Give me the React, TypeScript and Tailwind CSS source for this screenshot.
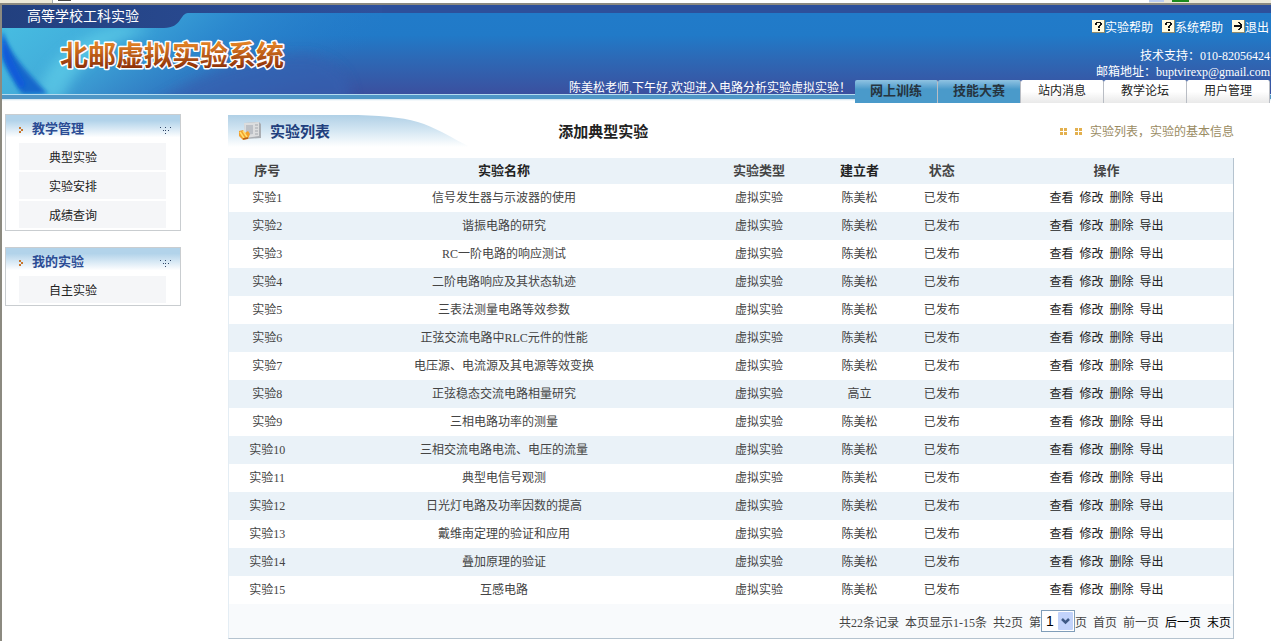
import { useState } from "react";
import clsx from "clsx";

const tabs = [
  { label: "网上训练", active: true },
  { label: "技能大赛", active: true },
  { label: "站内消息", active: false },
  { label: "教学论坛", active: false },
  { label: "用户管理", active: false },
];

const menus = [
  { title: "教学管理", items: ["典型实验", "实验安排", "成绩查询"] },
  { title: "我的实验", items: ["自主实验"] },
];

const experiments = [
  { name: "信号发生器与示波器的使用", author: "陈美松" },
  { name: "谐振电路的研究", author: "陈美松" },
  { name: "RC一阶电路的响应测试", author: "陈美松" },
  { name: "二阶电路响应及其状态轨迹", author: "陈美松" },
  { name: "三表法测量电路等效参数", author: "陈美松" },
  { name: "正弦交流电路中RLC元件的性能", author: "陈美松" },
  { name: "电压源、电流源及其电源等效变换", author: "陈美松" },
  { name: "正弦稳态交流电路相量研究", author: "高立" },
  { name: "三相电路功率的测量", author: "陈美松" },
  { name: "三相交流电路电流、电压的流量", author: "陈美松" },
  { name: "典型电信号观测", author: "陈美松" },
  { name: "日光灯电路及功率因数的提高", author: "陈美松" },
  { name: "戴维南定理的验证和应用", author: "陈美松" },
  { name: "叠加原理的验证", author: "陈美松" },
  { name: "互感电路", author: "陈美松" },
];

const actions = ["查看", "修改", "删除", "导出"];

function HelpIcon({ type }: { type: "help" | "exit" }) {
  return (
    <svg width="13" height="13" viewBox="0 0 13 13" shapeRendering="crispEdges" className="mb-1" aria-hidden="true">
      <rect width="13" height="13" fill="#8f8a6a" />
      <rect width="12" height="12" fill="#fffbe0" />
      {type === "help" ? (
        <path d="M4 2h5v1H4zM3 3h2v2H3zM8 3h2v2H8zM7 5h2v1H7zM6 6h2v2H6zM6 9h2v2H6z" fill="#111" />
      ) : (
        <path d="M2 5h8v2H2zM6 2h2v1H6zM7 3h2v1H7zM8 4h2v1H8zM8 7h2v1H8zM7 8h2v1H7zM6 9h2v1H6z" fill="#111" />
      )}
    </svg>
  );
}

function HeaderArt() {
  return (
    <svg width="380" height="90" viewBox="0 0 380 90" className="absolute left-0 top-0" aria-hidden="true">
      <defs>
        <linearGradient id="sky" x1="0" y1="0" x2="1" y2="0.25">
          <stop offset="0" stopColor="#48bfe2" />
          <stop offset="0.3" stopColor="#43b0dc" stopOpacity="0.95" />
          <stop offset="0.6" stopColor="#2f8dd0" stopOpacity="0.75" />
          <stop offset="1" stopColor="#2878c8" stopOpacity="0" />
        </linearGradient>
        <linearGradient id="ribbon" x1="0" y1="0" x2="1" y2="0">
          <stop offset="0" stopColor="#22407f" />
          <stop offset="1" stopColor="#2e519d" />
        </linearGradient>
        <filter id="soft" x="-30%" y="-30%" width="160%" height="160%">
          <feGaussianBlur stdDeviation="6" />
        </filter>
        <filter id="edge" x="-30%" y="-30%" width="160%" height="160%">
          <feGaussianBlur stdDeviation="2" />
        </filter>
        <clipPath id="art">
          <rect y="8" width="380" height="81" />
        </clipPath>
      </defs>
      <g clipPath="url(#art)">
        <rect y="8" width="380" height="81" fill="url(#sky)" />
        <path d="M60 95C75 55 110 35 150 25L120 20C80 28 40 55 35 95Z" fill="#63d3ea" opacity="0.6" filter="url(#soft)" />
        <path d="M150 100C200 68 250 48 310 50C345 60 350 80 350 100Z" fill="#3560b0" opacity="0.7" filter="url(#soft)" />
        <path d="M0 26C8 50 28 70 46 89H20C10 72 2 60 0 52Z" fill="#1568cc" filter="url(#edge)" />
        <path d="M0 26C4 42 12 60 24 80L18 84C8 68 2 54 0 48Z" fill="#0a55e0" opacity="0.7" filter="url(#edge)" />
      </g>
      <path d="M0 0H380V8H186C178 8 180 23 162 23H0Z" fill="url(#ribbon)" />
    </svg>
  );
}

function Logo() {
  return (
    <svg width="260" height="52" viewBox="0 0 260 52" role="img" aria-label="北邮虚拟实验系统">
      <defs>
        <linearGradient id="gold" x1="0" y1="0" x2="0" y2="1">
          <stop offset="0.25" stopColor="#e08024" />
          <stop offset="0.85" stopColor="#8c2f08" />
        </linearGradient>
      </defs>
      <text
        x="4"
        y="37"
        fill="url(#gold)"
        stroke="#fff"
        strokeWidth="3"
        strokeLinejoin="round"
        paintOrder="stroke"
        className="font-['Noto_Sans_CJK_SC',sans-serif] text-[28px] font-bold"
      >
        北邮虚拟实验系统
      </text>
    </svg>
  );
}

function Header() {
  return (
    <header className="relative flex h-[98px] justify-between bg-[linear-gradient(to_bottom,#2d509b_0,#2d509b_8px,#217bc9_8px,#217ac8_30px,#2d68b5_55px,#3b509f_89px,#b5dcf0_89px,#b5dcf0_90px,#4f96c6_90px,#4f96c6_94px,#cfe3ef_94px,#ffffff_96px)] text-white">
      <HeaderArt />
      <div className="relative flex flex-col">
        <p className="pl-[25px] text-[14px] leading-[24px]">高等学校工科实验</p>
        <h1 className="pl-[54px]">
          <Logo />
        </h1>
      </div>
      <div className="relative flex flex-col items-end pt-[14px]">
        <nav className="flex h-[18px] items-center gap-[9px] pr-[2px]">
          <a href="#lab-help" className="flex items-center leading-[18px]"><HelpIcon type="help" />实验帮助</a>
          <a href="#system-help" className="flex items-center leading-[18px]"><HelpIcon type="help" />系统帮助</a>
          <a href="#exit" className="flex items-center leading-[18px]"><HelpIcon type="exit" />退出</a>
        </nav>
        <p className="mt-[11px] pr-px leading-[16px]">技术支持：010-82056424</p>
        <p className="pr-px leading-[16px]">邮箱地址：buptvirexp@gmail.com</p>
        <div className="flex">
          <p className="pr-1 leading-[16px]">陈美松老师,下午好,欢迎进入电路分析实验虚拟实验！</p>
          <nav className="flex pr-px">
            {tabs.map((tab) => (
              <a
                key={tab.label}
                href="#tab"
                className={clsx(
                  "h-[23px] w-[83px] rounded-t-[2px] border-r border-[#b9bdc4] text-center leading-[22px]",
                  tab.active
                    ? "bg-linear-to-b from-[#8fc3e2] to-[#4a9aca] to-40% text-[13px] font-bold text-[#26343f]"
                    : "bg-linear-to-b from-white from-50% to-[#e9e9e9] text-[#222]",
                )}
              >
                {tab.label}
              </a>
            ))}
          </nav>
        </div>
      </div>
    </header>
  );
}

function SideMenu({ title, items }: { title: string; items: string[] }) {
  return (
    <section className="border border-[#c9cdd0] pb-[2px]">
      <h2 className="flex h-7 items-center bg-linear-to-b from-[#b2d3ea] from-20% to-white to-80% pl-3 pr-2 text-[13px] font-bold leading-7 text-[#2b4c94]">
        <svg width="6" height="8" viewBox="0 0 6 8" shapeRendering="crispEdges" className="mt-1" aria-hidden="true">
          <path d="M1 0h2v2H1zM3 2h2v2H3zM1 4h2v2H1z" fill="#c8762c" />
        </svg>
        <span className="ml-2 flex-1">{title}</span>
        <svg width="12" height="8" viewBox="0 0 12 8" shapeRendering="crispEdges" className="mt-1" aria-hidden="true">
          <path d="M0 0h1v1H0zM5 0h1v1H5zM10 0h1v1h-1zM3 3h1v1H3zM8 3h1v1H8zM5 3h1v1H5zM5 6h1v1H5z" fill="#2f4668" />
        </svg>
      </h2>
      <ul className="flex flex-col gap-[2px] pl-[13px] pr-[14px]">
        {items.map((item) => (
          <li key={item} className="h-[27px] bg-[#f5f6f8] pl-[30px] leading-[30px]">
            <a href="#menu" className="text-[#222]">{item}</a>
          </li>
        ))}
      </ul>
    </section>
  );
}

function ListHeading() {
  return (
    <div className="relative flex h-11 items-center">
      <svg width="240" height="32" viewBox="0 0 240 32" className="absolute left-0 top-[1px]" aria-hidden="true">
        <defs>
          <linearGradient id="swoosh" x1="0" y1="0" x2="0" y2="1">
            <stop offset="0" stopColor="#b0d0e6" />
            <stop offset="0.5" stopColor="#d5e7f3" />
            <stop offset="1" stopColor="#ffffff" />
          </linearGradient>
        </defs>
        <path d="M0 0H130C160 1 180 3 196 9C212 15 228 25 240 31V32H0Z" fill="url(#swoosh)" />
      </svg>
      <div className="relative flex w-[36%] min-w-[240px] items-center pl-[10px] pb-2">
        <svg width="24" height="22" viewBox="0 0 24 22" aria-hidden="true">
          <path d="M6 2L21 1L23 3V17L8 18Z" fill="#aaaeb3" />
          <path d="M6 2L21 1V15L7 17Z" fill="#dcddde" />
          <path d="M8 4L15 4V13L8 14Z" fill="#bcc0c6" />
          <path d="M17 4h3M17 7h3M17 10h3M17 13h3" stroke="#a4a8ad" />
          <path d="M1 10L5 9L7 12L10 10L12 13L10 18L5 19L1 15Z" fill="#f2a02c" />
          <path d="M2 11l4 6M5 10l4 6" stroke="#ffdf70" strokeWidth="1.5" />
          <path d="M5 18l5-1" stroke="#b85f18" strokeWidth="1.5" />
        </svg>
        <h2 className="ml-2 text-[15px] font-bold leading-5 text-[#223f7d]">实验列表</h2>
      </div>
      <a href="#add" className="relative -ml-8 pb-2 text-[15px] font-bold leading-5 text-[#222]">添加典型实验</a>
      <p className="ml-auto flex items-center pb-2 leading-5 text-[#9a8b62]">
        {[0, 1].map((i) => (
          <svg key={i} width="8" height="8" viewBox="0 0 8 8" shapeRendering="crispEdges" className="mr-[7px]" aria-hidden="true">
            <path d="M0 0h3v3H0zM4 0h3v3H4zM0 4h3v3H0zM4 4h3v3H4z" fill="#e3b04e" />
          </svg>
        ))}
        实验列表，实验的基本信息
      </p>
    </div>
  );
}

function Pager() {
  const [page, setPage] = useState("1");

  return (
    <div className="flex h-[34px] items-center justify-end bg-[#f8fafc] pr-[2px] pt-1 text-[#444]">
      <span className="mr-[6px]">共22条记录</span>
      <span className="mr-[6px]">本页显示1-15条</span>
      <span className="mr-[6px]">共2页</span>
      <label htmlFor="page">第</label>
      <span className="relative mb-1 flex">
        <select
          id="page"
          value={page}
          onChange={(e) => setPage(e.target.value)}
          className="h-[22px] w-[34px] appearance-none border border-[#7f9db9] bg-white pl-1 font-['Liberation_Sans',sans-serif] text-[14px] leading-5 text-black"
        >
          <option>1</option>
          <option>2</option>
        </select>
        <svg width="15" height="18" viewBox="0 0 15 18" className="pointer-events-none absolute right-[2px] top-[2px]" aria-hidden="true">
          <rect width="15" height="18" rx="1" fill="#c2d3fb" />
          <path d="M4 7l3.5 3.5L11 7" fill="none" stroke="#3f5a86" strokeWidth="2.5" />
        </svg>
      </span>
      <span className="mr-[6px]">页</span>
      <span className="mr-[6px]">首页</span>
      <span className="mr-[6px]">前一页</span>
      <a href="#next" className="mr-[6px] text-black">后一页</a>
      <a href="#last" className="text-black">末页</a>
    </div>
  );
}

export default function App() {
  return (
    <div className="min-h-screen bg-white font-['Liberation_Serif','Noto_Sans_CJK_SC',serif] text-[12px] text-[#444]">
      {/* bottom edge of the browser toolbar */}
      <div className="flex h-[3px] bg-[#ece9d8]">
        <div className="ml-[52px] flex-1 border-l border-[#a0a8b0] bg-white pl-[5px]">
          <div className="h-px w-[13px] bg-[#444]" />
        </div>
        <div className="h-[2px] w-[15px] bg-[#bccdf0]" />
        <div className="ml-2 mr-[82px] h-[2px] w-[17px] bg-[#1c8a1c]" />
      </div>
      <div className="min-h-[638px] border-l-2 border-t-2 border-[#8c8a80]">
        <Header />
        <div className="flex items-start pl-[3px] pr-[37px] pt-[11px]">
          <aside className="flex w-[176px] shrink-0 flex-col gap-4">
            {menus.map((menu) => (
              <SideMenu key={menu.title} title={menu.title} items={menu.items} />
            ))}
          </aside>
          <main className="ml-[47px] flex-1">
            <ListHeading />
            <div className="border-b border-l border-r border-b-[#b5c3cf] border-l-[#e4edf4] border-r-[#b5c3cf]">
              <table className="w-full table-fixed text-center">
                <colgroup>
                  <col className="w-[7.6%]" />
                  <col className="w-[39.6%]" />
                  <col className="w-[11.2%]" />
                  <col className="w-[8.8%]" />
                  <col className="w-[7.6%]" />
                  <col className="w-[25.2%]" />
                </colgroup>
                <thead>
                  <tr className="h-[26px] bg-[#eaf2f8] text-[13px] leading-5">
                    <th>序号</th>
                    <th className="text-[#222]">实验名称</th>
                    <th>实验类型</th>
                    <th className="text-[#222]">建立者</th>
                    <th>状态</th>
                    <th>操作</th>
                  </tr>
                </thead>
                <tbody>
                  {experiments.map((row, i) => (
                    <tr key={row.name} className="h-7 leading-5 even:bg-[#eaf2f8]">
                      <td>实验{i + 1}</td>
                      <td>{row.name}</td>
                      <td>虚拟实验</td>
                      <td>{row.author}</td>
                      <td>已发布</td>
                      <td>
                        <div className="flex justify-center gap-[6px] text-[#222]">
                          {actions.map((action) => (
                            <a key={action} href="#action">{action}</a>
                          ))}
                        </div>
                      </td>
                    </tr>
                  ))}
                </tbody>
              </table>
              <Pager />
            </div>
          </main>
        </div>
      </div>
    </div>
  );
}
